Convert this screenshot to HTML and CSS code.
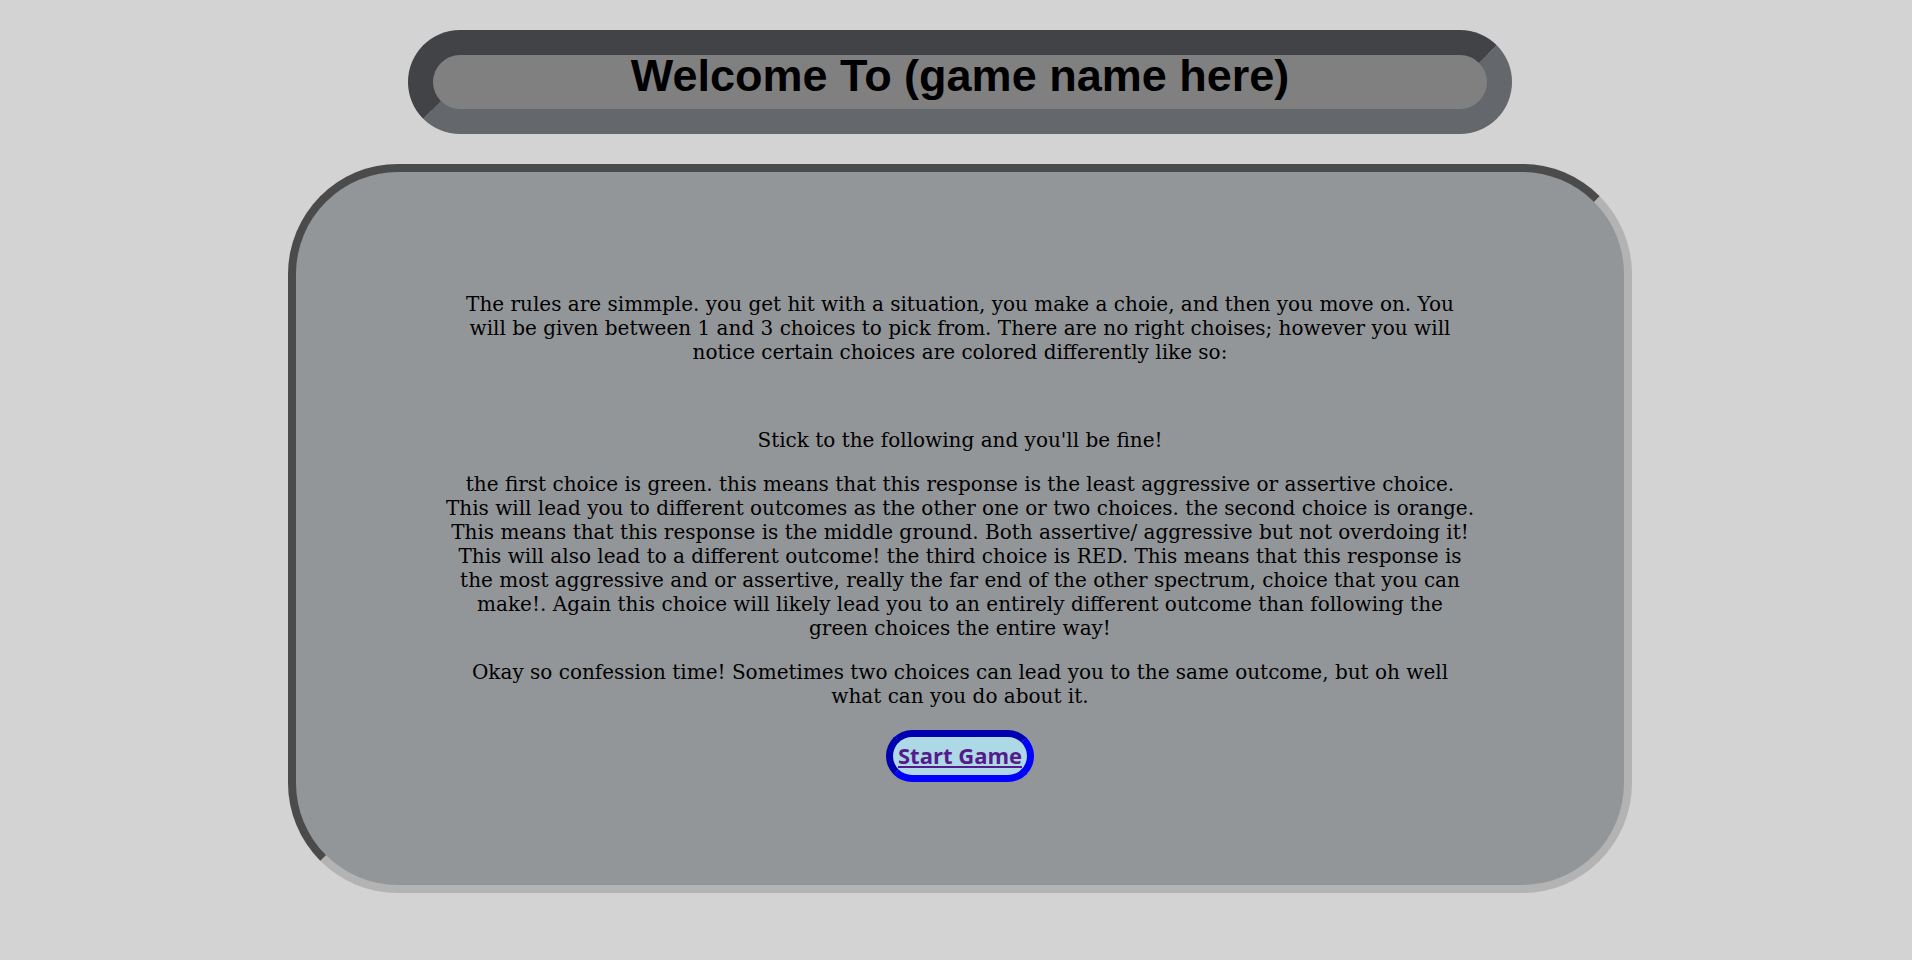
FILE: index.html
```html
<!DOCTYPE html>
<html>
<head>
<meta charset="utf-8">
<title>Welcome</title>
<link rel="stylesheet" href="styles.css">
</head>
<body>
<header class="title-bar">
  <h1 class="title">Welcome To (game name here)</h1>
</header>
<main class="rules-card">
  <p>The rules are simmple. you get hit with a situation, you make a choie, and then you move on. You will be given between 1 and 3 choices to pick from. There are no right choises; however you will notice certain choices are colored differently like so:</p>
  <p>&nbsp;</p>
  <p>Stick to the following and you'll be fine!</p>
  <p>the first choice is green. this means that this response is the least aggressive or assertive choice. This will lead you to different outcomes as the other one or two choices. the second choice is orange. This means that this response is the middle ground. Both assertive/ aggressive but not overdoing it! This will also lead to a different outcome! the third choice is RED. This means that this response is the most aggressive and or assertive, really the far end of the other spectrum, choice that you can make!. Again this choice will likely lead you to an entirely different outcome than following the green choices the entire way!</p>
  <p>Okay so confession time! Sometimes two choices can lead you to the same outcome, but oh well what can you do about it.</p>
  <a class="start-btn" href="#">Start Game</a>
</main>
</body>
</html>
```
FILE: styles.css
```css
html, body {
  margin: 0;
  padding: 0;
}
body {
  background: #d3d3d3;
  padding-top: 30px;
  padding-bottom: 60px;
}
.title-bar {
  box-sizing: border-box;
  width: 1104px;
  height: 104px;
  margin: 0 0 0 408px;
  border: 25px solid;
  border-color: #424347 #64676b #64676b #424347;
  border-radius: 60px;
  background: #808080;
}
.title {
  margin: 0;
  font-family: "Liberation Sans", Arial, sans-serif;
  font-weight: bold;
  font-size: 45px;
  line-height: 42px;
  text-align: center;
  color: #000;
}
.rules-card {
  box-sizing: border-box;
  width: 1344px;
  margin: 30px 0 0 288px;
  border: 8px solid;
  border-color: #4b4b4b #b3b3b3 #b3b3b3 #4b4b4b;
  border-radius: 110px;
  background: #939699;
  padding: 100px 0 103px;
  font-family: "DejaVu Serif", serif;
  font-size: 20px;
  text-align: center;
  color: #000;
}
.rules-card p {
  width: 1029px;
  margin: 20px auto;
}
.start-btn {
  display: block;
  box-sizing: border-box;
  width: 148px;
  height: 52px;
  margin: 22px auto 0;
  border: 7px solid;
  border-color: #0000b0 #0000ff #0000ff #0000b0;
  border-radius: 30px;
  background: #add8e6;
  color: #551a8b;
  font-family: "Open Sans", sans-serif;
  font-weight: bold;
  font-size: 22px;
  line-height: 36px;
  text-decoration: underline;
  text-align: center;
}
```
